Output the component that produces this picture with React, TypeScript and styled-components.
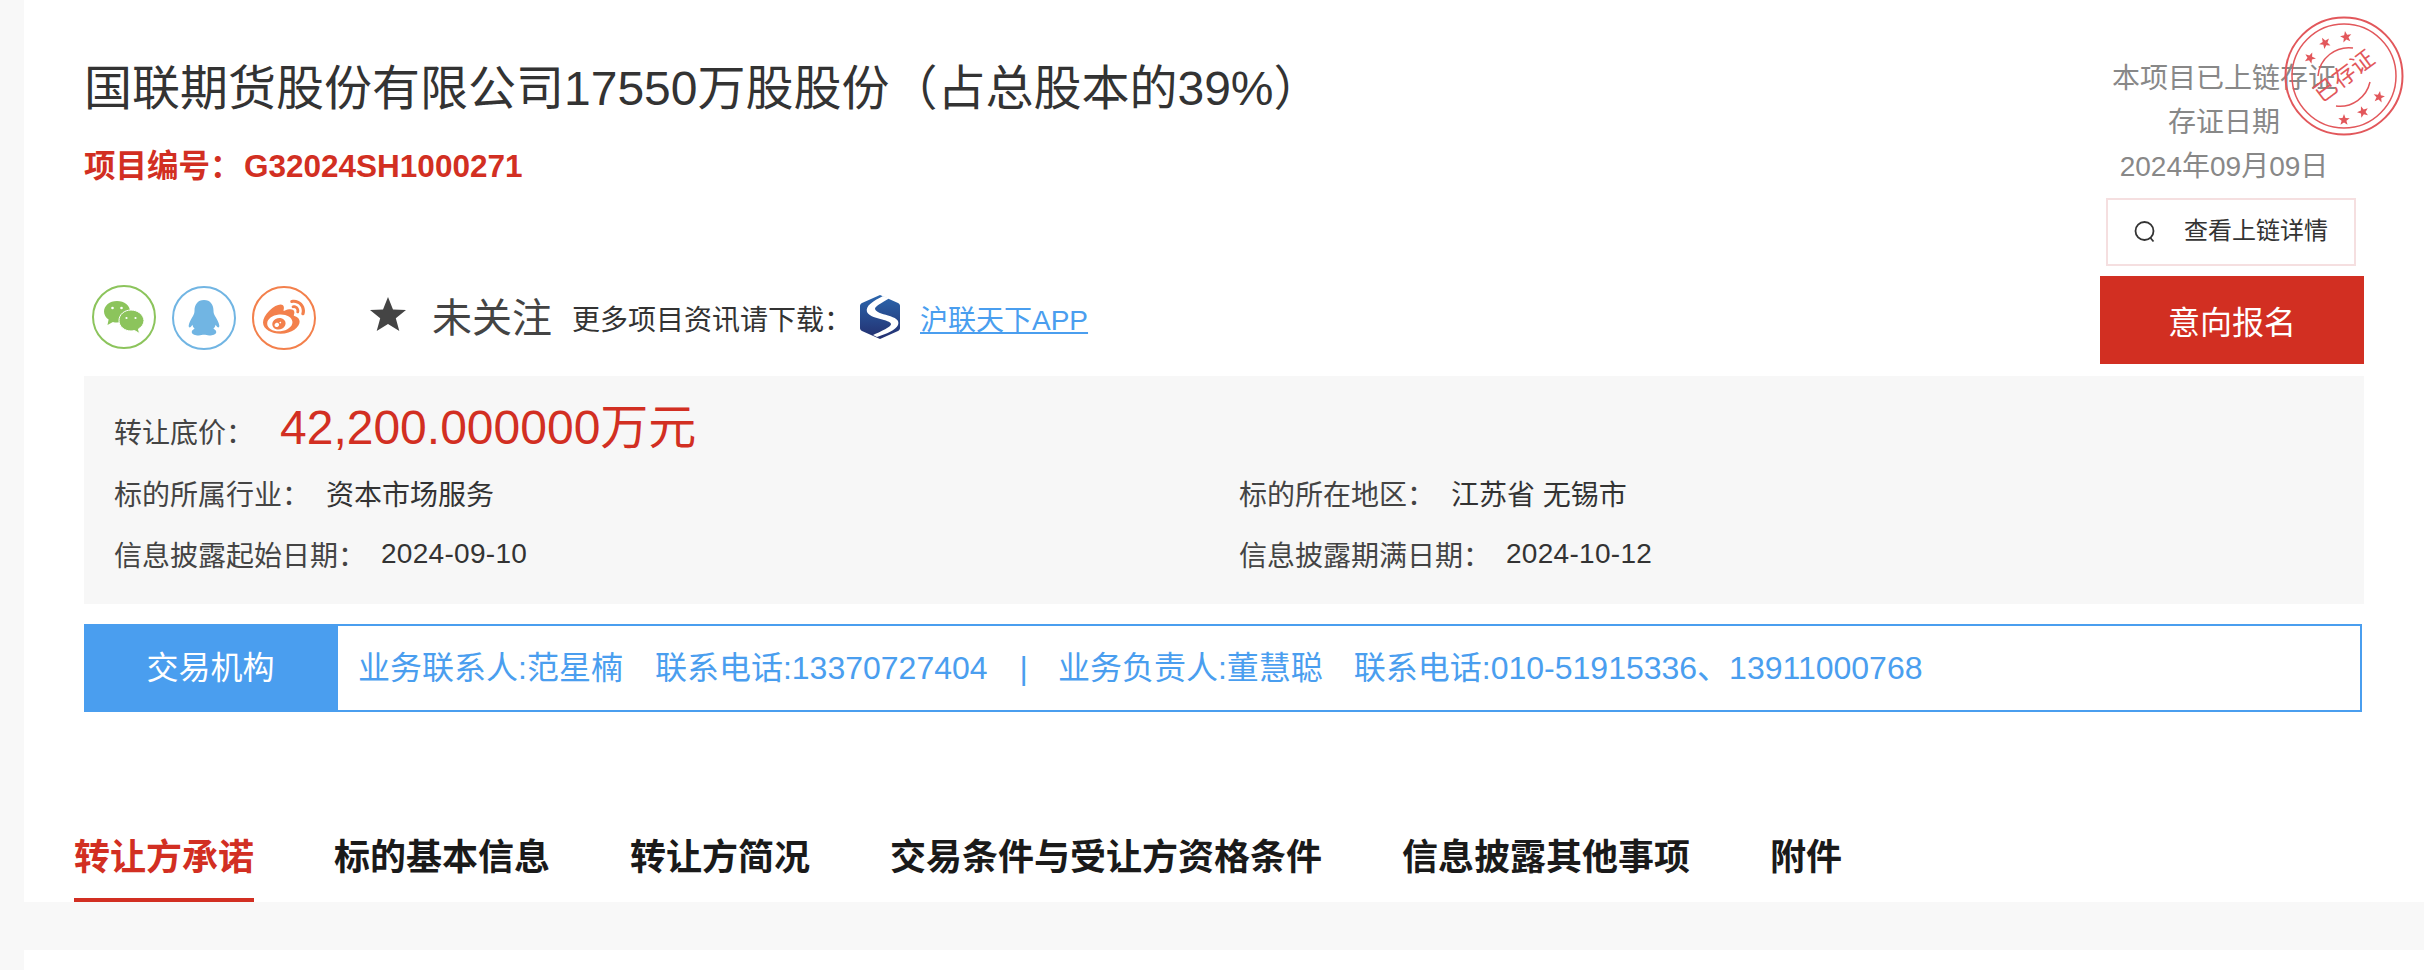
import React from 'react';
import styled, { createGlobalStyle } from 'styled-components';
import { FaWeibo } from 'react-icons/fa';

const GlobalStyle = createGlobalStyle`
  html, body {
    margin: 0;
    padding: 0;
    height: 970px;
    overflow: hidden;
    background: #f8f8f8;
    font-family: "Liberation Sans", "Noto Sans CJK SC", sans-serif;
  }
`
const Card = styled.div`
  margin-left: 24px;
  background: #fff;
  height: 902px;
  padding: 0 60px;
  box-sizing: border-box;
`
const NextCard = styled.div`
  margin: 48px 0 0 24px;
  background: #fff;
  height: 20px;
`
const Head = styled.div`
  display: flex;
  justify-content: space-between;
  height: 376px;
`
const HeadLeft = styled.div`
  display: flex;
  flex-direction: column;
`
const Title = styled.h1`
  margin: 60px 0 0;
  font-size: 48px;
  line-height: 58px;
  font-weight: 400;
  color: #333;
  white-space: nowrap;
`
const ProjectCode = styled.div`
  margin-top: 26px;
  display: flex;
  font-size: 31.5px;
  line-height: 44px;
  font-weight: 700;
  color: #d22f22;
`
const CodeLabel = styled.span`
  width: 160px;
`
const ShareRow = styled.div`
  margin-top: 96px;
  margin-left: 8px;
  display: flex;
  align-items: center;
  height: 66px;
`
const ShareBtn = styled.span<{ $color: string; $top?: number }>`
  width: 64px;
  height: 64px;
  margin-right: 16px;
  margin-top: ${p => p.$top ?? 2}px;
  border: 2px solid ${p => p.$color};
  border-radius: 50%;
  box-sizing: border-box;
  display: flex;
  align-items: center;
  justify-content: center;
  color: ${p => p.$color};
`
const Follow = styled.span`
  margin-left: 38px;
  display: flex;
  align-items: center;
  font-size: 40px;
  color: #444;
`
const FollowStar = styled.svg`
  margin-top: -6px;
`
const FollowText = styled.span`
  margin: -4px 0 0 26px;
`
const DownloadText = styled.span`
  margin: 2px 0 0 20px;
  font-size: 28px;
  color: #333;
  white-space: nowrap;
`
const AppLink = styled.a`
  margin: 2px 0 0 20px;
  font-size: 28px;
  color: #4a9eef;
  text-decoration: underline;
  white-space: nowrap;
`
const Logo = styled.svg`
  margin-left: 8px;
`
const HeadRight = styled.div`
  position: relative;
  width: 264px;
  display: flex;
  flex-direction: column;
  align-items: center;
  padding-top: 57px;
  box-sizing: border-box;
`
const ChainLine = styled.div`
  font-size: 28px;
  line-height: 44px;
  color: #888;
  white-space: nowrap;
  transform: translateX(-8px);
`
const ChainButton = styled.div`
  margin-top: 9px;
  width: 250px;
  height: 68px;
  margin-left: -2px;
  box-sizing: border-box;
  border: 2px solid #f5dfe0;
  display: flex;
  align-items: center;
  padding-left: 26px;
  gap: 28px;
  font-size: 24px;
  line-height: 30px;
  color: #333;
  background: #fff;
`
const ChainButtonLabel = styled.span`
  margin-top: -3px;
`
const SignUp = styled.div`
  margin-top: 10px;
  width: 264px;
  height: 88px;
  background: #d22f22;
  color: #fff;
  font-size: 32px;
  display: flex;
  align-items: center;
  justify-content: center;
`
const Stamp = styled.svg`
  position: absolute;
  left: 184px;
  top: 16px;
`
const InfoPanel = styled.div`
  height: 228px;
  background: #f7f7f7;
  padding: 24px 30px 0;
  box-sizing: border-box;
`
const PriceRow = styled.div`
  display: flex;
  align-items: center;
  height: 60px;
`
const InfoGrid = styled.div`
  display: grid;
  grid-template-columns: 1125px 1fr;
  grid-auto-rows: 61px;
  margin-top: 2px;
`
const InfoItem = styled.div`
  display: flex;
  align-items: center;
  font-size: 28px;
  color: #333;
  white-space: nowrap;
`
const InfoLabel = styled.span<{ $w: number; $top?: number }>`
  width: ${p => p.$w}px;
  margin-top: ${p => p.$top ?? 0}px;
  color: #444;
`
const PriceValue = styled.span`
  font-size: 48px;
  color: #d22f22;
  margin-top: -14px;
`
const DateValue = styled.span`
  letter-spacing: 0.3px;
`
const OrgBar = styled.div`
  margin-top: 20px;
  width: 2278px;
  height: 88px;
  display: flex;
  box-sizing: border-box;
  border: 2px solid #4a9eef;
`
const OrgLabel = styled.div`
  width: 252px;
  background: #4a9eef;
  color: #fff;
  font-size: 32px;
  line-height: 40px;
  display: flex;
  align-items: center;
  justify-content: center;
  padding: 0 3px 1px 0;
  box-sizing: border-box;
`
const OrgText = styled.div`
  padding: 0 0 1px 20px;
  display: flex;
  align-items: center;
  font-size: 32px;
  line-height: 40px;
  color: #4a9eef;
  white-space: nowrap;
`
const OrgPart = styled.span<{ $gap?: number }>`
  margin-left: ${p => p.$gap ?? 0}px;
`
const Tabs = styled.div`
  margin: 98px 0 0 -10px;
  display: flex;
  gap: 80px;
`
const Tab = styled.div<{ $active?: boolean }>`
  height: 92px;
  box-sizing: border-box;
  padding-top: 22px;
  font-size: 36px;
  line-height: 52px;
  font-weight: 700;
  color: ${p => (p.$active ? '#d22f22' : '#1a1a1a')};
  border-bottom: 4px solid ${p => (p.$active ? '#d22f22' : 'transparent')};
  white-space: nowrap;
`

const WechatIcon = () => (
  <svg width="42" height="34" viewBox="0 0 42 34">
    <path fill="#8cc45c" d="M14 1C6.500 1 1 5.700 1 11.500c0 3.300 1.800 6.100 4.600 8L4.500 25l5.400-3.100c1.300.4 2.700.6 4.100.6 7.500 0 13-4.700 13-11S21.500 1 14 1z" />
    <path fill="#8cc45c" stroke="#fff" strokeWidth="1" d="M28 10c-6.600 0-12 4.500-12 10.500S21.400 31 28 31c1.200 0 2.400-.2 3.500-.5l5 3-1-4.600c3.300-1.900 5.500-5 5.500-8.400C40.500 14.500 34.600 10 28 10z" />
    <circle cx="9.500" cy="8" r="1.300" fill="#fff" />
    <circle cx="18.500" cy="8" r="1.300" fill="#fff" />
    <circle cx="23.500" cy="18" r="1.100" fill="#fff" />
    <circle cx="32.500" cy="18" r="1.100" fill="#fff" />
  </svg>
)

const QqIcon = () => (
  <svg width="32" height="36" viewBox="0 0 32 36">
    <path fill="#71b5e3" d="M16 0C9.500 0 6.500 5 6.500 10.500c0 2-.3 3.500-1.500 5.500C3.300 19 1 22.500.7 25.500c-.2 1.800 1 2.500 2 1.500.6-.6 1.200-1.400 1.600-2.300.4 1.600 1.200 3 2.300 4.100C4.800 29.600 3.500 30.800 3.800 32.500c.4 2.200 4 3.100 7 3 2-.1 3.500-.7 5.200-.7s3.200.6 5.200.7c3 .1 6.600-.8 7-3 .3-1.700-1-2.900-2.800-3.700 1.100-1.100 1.900-2.500 2.300-4.100.4.900 1 1.700 1.600 2.300 1 1 2.200.3 2-1.500-.3-3-2.600-6.500-4.300-9.500-1.200-2-1.500-3.500-1.500-5.500C25.500 5 22.500 0 16 0z" />
  </svg>
)

const HuLianLogo = () => (
  <Logo width="40" height="44" viewBox="0 0 40 44">
    <defs>
      <linearGradient id="logoBlue" x1="0" y1="0" x2="0" y2="1">
        <stop offset="0" stopColor="#2b66ad" />
        <stop offset="1" stopColor="#232f6f" />
      </linearGradient>
    </defs>
    <path fill="url(#logoBlue)" d="M20 0l18 8c1.200.6 2 1.500 2 3v22c0 1.500-.8 2.400-2 3l-18 8L2 36c-1.200-.6-2-1.500-2-3V11c0-1.500.8-2.400 2-3z" />
    <path fill="#fff" d="M23 1C13 6 5 11 7 17c2 4.500 10 6 17 8 5 1.500 9 3.300 6 6-3 2.500-10 6-17 9l4 2c9-3 19-7 21-12 2-5-3-7.500-10-9.500-6-1.700-13-3.500-13-7 0-2 7-6 14-10z" />
  </Logo>
)

const star = (cx: number, cy: number, r: number, rot: number) => {
  const pts: string[] = [];
  for (let i = 0; i < 10; i++) {
    const rr = i % 2 === 0 ? r : r * 0.42;
    const a = ((rot + i * 36 - 90) * Math.PI) / 180;
    pts.push(`${(cx + rr * Math.cos(a)).toFixed(2)},${(cy + rr * Math.sin(a)).toFixed(2)}`);
  }
  return pts.join(' ');
}

const StampMark = () => (
  <Stamp width="120" height="120" viewBox="0 0 120 120">
    <circle cx="60" cy="60" r="58.500" fill="none" stroke="#e2575b" strokeWidth="2" />
    <circle cx="60" cy="60" r="52" fill="none" stroke="#e2575b" strokeWidth="1.500" />
    <polygon fill="#e2575b" points={star(26, 42, 6, -50)} />
    <polygon fill="#e2575b" points={star(41, 27, 6, -30)} />
    <polygon fill="#e2575b" points={star(62, 21, 6, -10)} />
    <polygon fill="#e2575b" points={star(95, 81, 6, 10)} />
    <polygon fill="#e2575b" points={star(79, 96, 6, -20)} />
    <polygon fill="#e2575b" points={star(60, 104, 6, 0)} />
    <path d="M34 60 A 31 31 0 0 1 69 32" fill="none" stroke="#e2575b" strokeWidth="1.500" />
    <path d="M86 66 A 31 31 0 0 1 52 90" fill="none" stroke="#e2575b" strokeWidth="1.500" />
    <text
      x="60"
      y="68"
      textAnchor="middle"
      fontSize="23"
      fill="#e2575b"
      fontFamily="Noto Sans CJK SC, sans-serif"
      transform="rotate(-37 60 60)"
    >
      已存证
    </text>
  </Stamp>
)

const App = () => {
  return (
    <>
      <GlobalStyle />
      <Card>
        <Head>
          <HeadLeft>
            <Title>国联期货股份有限公司17550万股股份（占总股本的39%）</Title>
            <ProjectCode>
              <CodeLabel>项目编号：</CodeLabel>
              <span>G32024SH1000271</span>
            </ProjectCode>
            <ShareRow>
              <ShareBtn $color="#8cc45c" $top={0}>
                <WechatIcon />
              </ShareBtn>
              <ShareBtn $color="#71b5e3">
                <QqIcon />
              </ShareBtn>
              <ShareBtn $color="#f3804c">
                <FaWeibo size={42} />
              </ShareBtn>
              <Follow>
                <FollowStar width="36" height="34" viewBox="0 0 36 34">
                  <polygon fill="#444" points="18,0 23,12.500 36,13 25.800,21.300 29.300,34 18,26.900 6.700,34 10.200,21.300 0,13 13,12.500" />
                </FollowStar>
                <FollowText>未关注</FollowText>
              </Follow>
              <DownloadText>更多项目资讯请下载：</DownloadText>
              <HuLianLogo />
              <AppLink href="#">沪联天下APP</AppLink>
            </ShareRow>
          </HeadLeft>
          <HeadRight>
            <ChainLine>本项目已上链存证</ChainLine>
            <ChainLine>存证日期</ChainLine>
            <ChainLine>2024年09月09日</ChainLine>
            <StampMark />
            <ChainButton>
              <svg width="22" height="22" viewBox="0 0 22 22">
                <circle cx="10.500" cy="10" r="9" fill="none" stroke="#333" strokeWidth="1.800" />
                <path d="M16.500 17l3 3.500" stroke="#333" strokeWidth="1.800" />
              </svg>
              <ChainButtonLabel>查看上链详情</ChainButtonLabel>
            </ChainButton>
            <SignUp>意向报名</SignUp>
          </HeadRight>
        </Head>
        <InfoPanel>
          <PriceRow>
            <InfoItem>
              <InfoLabel $w={166} $top={2}>转让底价：</InfoLabel>
              <PriceValue>42,200.000000万元</PriceValue>
            </InfoItem>
          </PriceRow>
          <InfoGrid>
            <InfoItem>
              <InfoLabel $w={212}>标的所属行业：</InfoLabel>
              资本市场服务
            </InfoItem>
            <InfoItem>
              <InfoLabel $w={212}>标的所在地区：</InfoLabel>
              江苏省 无锡市
            </InfoItem>
            <InfoItem>
              <InfoLabel $w={267}>信息披露起始日期：</InfoLabel>
              <DateValue>2024-09-10</DateValue>
            </InfoItem>
            <InfoItem>
              <InfoLabel $w={267}>信息披露期满日期：</InfoLabel>
              <DateValue>2024-10-12</DateValue>
            </InfoItem>
          </InfoGrid>
        </InfoPanel>
        <OrgBar>
          <OrgLabel>交易机构</OrgLabel>
          <OrgText>
            <OrgPart>业务联系人:范星楠</OrgPart>
            <OrgPart $gap={32}>联系电话:13370727404</OrgPart>
            <OrgPart $gap={32}>|</OrgPart>
            <OrgPart $gap={30}>业务负责人:董慧聪</OrgPart>
            <OrgPart $gap={31}>联系电话:010-51915336、13911000768</OrgPart>
          </OrgText>
        </OrgBar>
        <Tabs>
          <Tab $active>转让方承诺</Tab>
          <Tab>标的基本信息</Tab>
          <Tab>转让方简况</Tab>
          <Tab>交易条件与受让方资格条件</Tab>
          <Tab>信息披露其他事项</Tab>
          <Tab>附件</Tab>
        </Tabs>
      </Card>
      <NextCard />
    </>
  );
}

export default App;
